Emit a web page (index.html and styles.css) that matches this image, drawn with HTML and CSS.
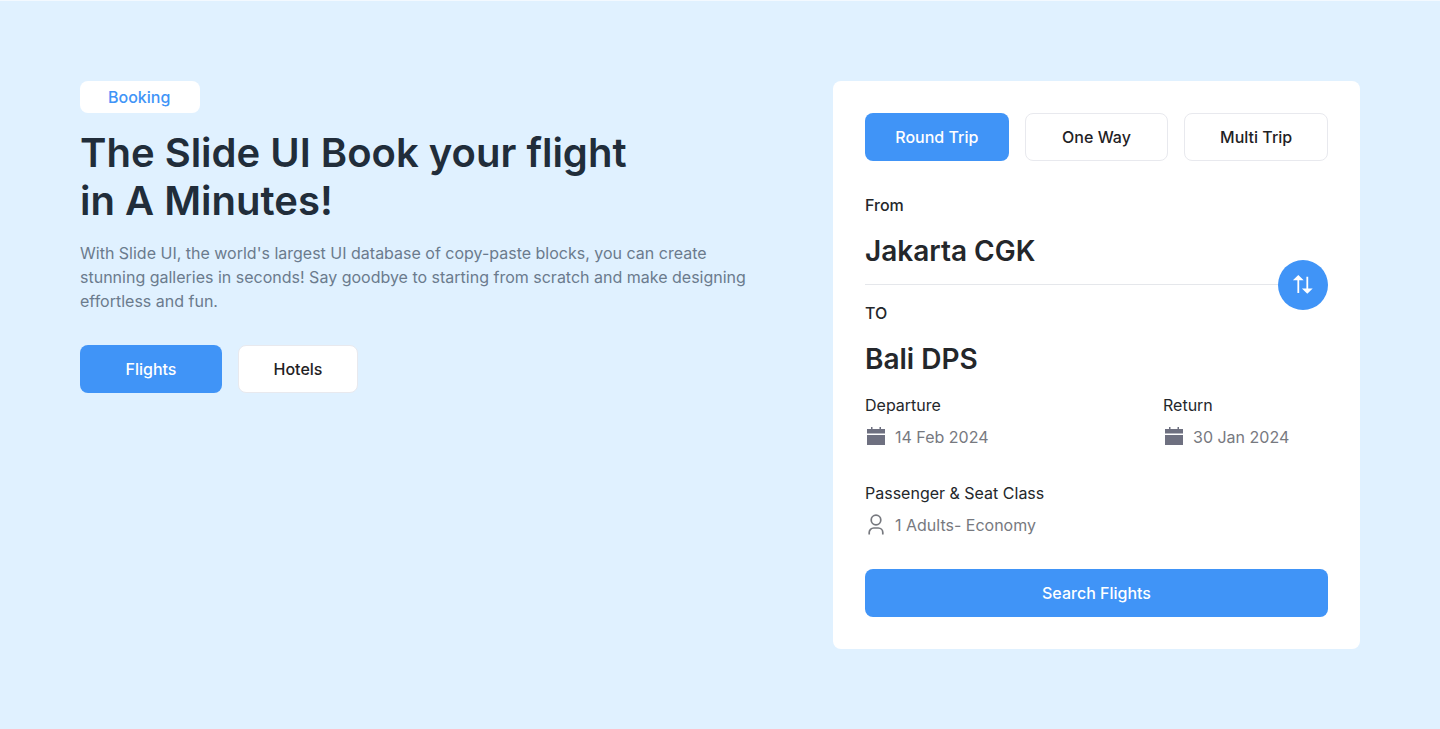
FILE: index.html
```html
<!DOCTYPE html>
<html lang="en">
<head>
<meta charset="utf-8">
<meta name="viewport" content="width=device-width, initial-scale=1">
<title>Slide UI Booking</title>
<link rel="stylesheet" href="styles.css">
</head>
<body>
<main class="hero">
  <section class="intro">
    <span class="badge">Booking</span>
    <h1 class="title">The Slide UI Book your flight<br>in A Minutes!</h1>
    <p class="lead">With Slide UI, the world's largest UI database of copy-paste blocks, you can create stunning galleries in seconds! Say goodbye to starting from scratch and make designing effortless and fun.</p>
    <div class="actions">
      <button type="button" class="btn btn-primary btn-flights">Flights</button>
      <button type="button" class="btn btn-light btn-hotels">Hotels</button>
    </div>
  </section>
  <form class="card">
    <div class="trips">
      <button type="button" class="btn btn-primary">Round Trip</button>
      <button type="button" class="btn btn-light">One Way</button>
      <button type="button" class="btn btn-light">Multi Trip</button>
    </div>
    <div class="route">
      <div class="stop stop-from">
        <span class="label">From</span>
        <strong class="city">Jakarta CGK</strong>
      </div>
      <div class="stop stop-to">
        <span class="label">TO</span>
        <strong class="city">Bali DPS</strong>
      </div>
      <button type="button" class="swap" aria-label="Swap origin and destination">
        <svg width="24" height="24" viewBox="0 0 24 24" fill="currentColor"><path d="M6 21V7H1l6-6 6 6H8v14zM16 3h2v13h5l-6 6-6-6h5z" transform="translate(1 1) scale(.9)"/></svg>
      </button>
    </div>
    <div class="dates">
      <div class="field">
        <span class="field-name">Departure</span>
        <span class="value"><svg class="calendar" width="22" height="22" viewBox="0 0 22 22" fill="currentColor"><path d="M2 7.5V3h4V1h1.5v2h7V1H16v2h4v4.500zM2 9h18v10H2z"/></svg>14 Feb 2024</span>
      </div>
      <div class="field">
        <span class="field-name">Return</span>
        <span class="value"><svg class="calendar" width="22" height="22" viewBox="0 0 22 22" fill="currentColor"><path d="M2 7.5V3h4V1h1.500v2h7V1H16v2h4v4.500zM2 9h18v10H2z"/></svg>30 Jan 2024</span>
      </div>
    </div>
    <div class="field passengers">
      <span class="field-name">Passenger &amp; Seat Class</span>
      <span class="value"><svg width="22" height="22" viewBox="0 0 22 22" fill="none" stroke="currentColor" stroke-width="1.700"><circle cx="11" cy="6" r="4.800"/><path d="M4.200 20.500v-2a4.500 4.500 0 0 1 4.500-4.500h4.600a4.500 4.500 0 0 1 4.500 4.500v2"/></svg>1 Adults- Economy</span>
    </div>
    <button type="submit" class="btn btn-primary search">Search Flights</button>
  </form>
</main>
</body>
</html>
```
FILE: styles.css
```css
* { box-sizing: border-box; }
body {
  margin: 0;
  min-height: 100vh;
  border-top: 1px solid #f3f9ff;
  background: #e0f1ff;
  color: #212d3a;
  font: 400 16px/24px Inter, "Liberation Sans", sans-serif;
}
.hero {
  display: grid;
  grid-template-columns: minmax(0, 673fr) minmax(0, 527fr);
  gap: 80px;
  align-items: start;
  padding: 80px;
}
.intro { display: flex; flex-direction: column; align-items: flex-start; }
.badge {
  min-width: 120px;
  padding: 4px 28px;
  border-radius: 8px;
  background: #fff;
  color: #4094f7;
  font-weight: 500;
}
.title { margin: 16px 0; font-size: 40px; line-height: 48px; font-weight: 600; }
.lead { margin: 0 0 32px; color: #6b7b8d; }
.actions { display: flex; gap: 16px; }
.btn {
  height: 48px;
  padding: 0 24px;
  border: 0;
  border-radius: 8px;
  font: inherit;
  font-weight: 500;
  cursor: pointer;
}
.btn-primary { background: #4094f7; color: #fff; }
.btn-light { border: 1px solid #e8e9ee; background: #fff; color: #1f2225; }
.btn-flights { width: 142px; }
.btn-hotels { width: 120px; }
.card {
  display: flex;
  flex-direction: column;
  padding: 32px;
  border-radius: 8px;
  background: #fff;
}
.trips { display: grid; grid-template-columns: repeat(3, 1fr); gap: 16px; }
.route { position: relative; margin-top: 32px; color: #24272b; }
.stop { display: flex; flex-direction: column; gap: 16px; }
.stop-from { padding-bottom: 16px; box-shadow: inset 0 -1px #e5e7eb; }
.stop-to { padding-top: 16px; }
.label { font-weight: 500; }
.city { font-size: 28px; line-height: 36px; font-weight: 600; }
.swap {
  position: absolute;
  top: 67px;
  right: 0;
  display: grid;
  place-items: center;
  width: 50px;
  height: 50px;
  padding: 0;
  border: 0;
  border-radius: 50%;
  background: #4094f7;
  color: #fff;
  cursor: pointer;
}
.dates { display: flex; justify-content: space-between; margin-top: 16px; }
.field { display: flex; flex-direction: column; gap: 8px; color: #24272b; }
.dates .field:last-child { width: 165px; }
.value { display: flex; align-items: center; gap: 8px; color: #77797f; }
.calendar { color: #6e7080; }
.passengers { margin: 32px 0; }
```
